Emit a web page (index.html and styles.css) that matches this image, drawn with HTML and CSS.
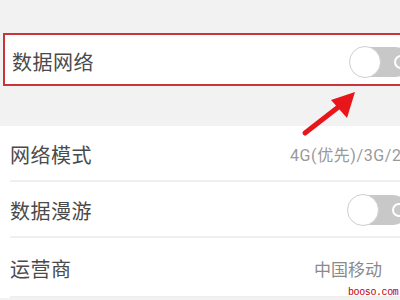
FILE: index.html
```html
<!DOCTYPE html>
<html lang="zh">
<head>
<meta charset="utf-8">
<link rel="stylesheet" href="styles.css">
</head>
<body>
<div class="page">
  <div class="top-gap"></div>
  <div class="hl-box">
    <div class="row first">
      <span class="label">数据网络</span>
      <span class="toggle"><span class="knob"></span><span class="ring"></span></span>
    </div>
  </div>
  <div class="mid-gap"></div>
  <div class="list">
    <div class="row item">
      <span class="label">网络模式</span>
      <span class="value mode">4G(优先)/3G/2G</span>
    </div>
    <div class="row item">
      <span class="label">数据漫游</span>
      <span class="toggle"><span class="knob"></span><span class="ring"></span></span>
    </div>
    <div class="row item last">
      <span class="label">运营商</span>
      <span class="value carrier">中国移动</span>
    </div>
  </div>
  <svg class="arrow" width="70" height="60" viewBox="0 0 70 60">
    <line x1="8" y1="47" x2="44" y2="19" stroke="#e8161b" stroke-width="5" stroke-linecap="round"/>
    <polygon points="58,6 34,14 50,32" fill="#e8161b"/>
  </svg>
  <span class="watermark">booso.com</span>
</div>
</body>
</html>
```
FILE: styles.css
```css
html, body {
  margin: 0;
  padding: 0;
  background: #f2f2f2;
  overflow: hidden;
}
.page {
  position: relative;
  width: 400px;
  height: 300px;
  overflow: hidden;
  font-family: "Noto Sans CJK SC", "Noto Sans", sans-serif;
}
.top-gap {
  height: 33px;
}
.hl-box {
  margin-left: 3px;
  margin-right: -10px;
  border: 2px solid #c8353b;
  background: #fff;
  height: 49px;
  box-sizing: content-box;
}
.row {
  display: flex;
  align-items: center;
  justify-content: space-between;
}
.first {
  height: 49px;
  padding-left: 7px;
  padding-top: 4px;
  box-sizing: border-box;
}
.first .toggle {
  margin-right: -2px;
}
.label {
  font-size: 20px;
  color: #4a4a4a;
  letter-spacing: 0.5px;
}
.mid-gap {
  height: 40px;
}
.list {
  background: #fff;
  padding-left: 10px;
}
.item {
  height: 56px;
  border-bottom: 2px solid #efefef;
  box-sizing: border-box;
  padding-top: 2px;
}
.item.last {
  height: 60px;
}
.value {
  font-size: 16px;
  color: #999;
  white-space: nowrap;
}
.mode {
  flex: none;
  width: 110px;
  margin-left: auto;
  font-family: Roboto, "Noto Sans CJK SC", sans-serif;
  letter-spacing: 0.6px;
  overflow: visible;
}
.carrier {
  margin-right: 18px;
  color: #8a8a8a;
  font-size: 17px;
}
.toggle {
  position: relative;
  display: block;
  width: 60px;
  height: 30px;
  border-radius: 15px;
  background: #c8c8c8;
  margin-right: -8px;
  flex: none;
}
.knob {
  position: absolute;
  left: -1px;
  top: -1px;
  width: 30px;
  height: 30px;
  border-radius: 50%;
  background: #fff;
  border: 1px solid #cfcfcf;
}
.ring {
  position: absolute;
  left: 44px;
  top: 8px;
  width: 10px;
  height: 10px;
  border-radius: 50%;
  border: 2px solid #fff;
}
.arrow {
  position: absolute;
  left: 297px;
  top: 86px;
}
.watermark {
  position: absolute;
  left: 348px;
  top: 287px;
  font-family: "Liberation Mono", monospace;
  font-size: 10px;
  letter-spacing: -0.4px;
  color: #c0000c;
  line-height: 11px;
}
```
